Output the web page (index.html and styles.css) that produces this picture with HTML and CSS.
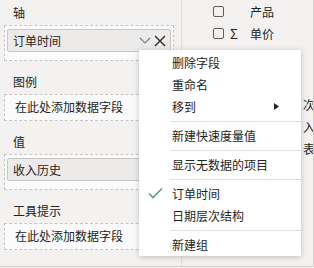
FILE: index.html
```html
<!DOCTYPE html>
<html lang="zh-CN">
<head>
    <meta charset="UTF-8">
    <title>字段面板</title>
    <link rel="stylesheet" href="styles.css">
</head>
<body>
<div class="frame">
    <div class="wells">
        <div class="well-label">轴</div>
        <div class="well">
            <div class="pill">
                <span>订单时间</span>
                <svg class="chev" width="12" height="7" viewBox="0 0 12 7"><path d="M1 1 L6 6 L11 1" fill="none" stroke="#6b8590" stroke-width="1.2"/></svg>
                <svg class="close" width="12" height="12" viewBox="0 0 12 12"><path d="M1 1 L11 11 M11 1 L1 11" fill="none" stroke="#252423" stroke-width="1.3"/></svg>
            </div>
        </div>

        <div class="well-label">图例</div>
        <div class="well empty">在此处添加数据字段</div>

        <div class="well-label">值</div>
        <div class="well">
            <div class="pill"><span>收入历史</span></div>
        </div>

        <div class="well-label">工具提示</div>
        <div class="well empty">在此处添加数据字段</div>
    </div>

    <div class="fields">
        <div class="field-row"><span class="box"></span><span class="sym"></span>产品</div>
        <div class="field-row"><span class="box"></span><span class="sym">Σ</span>单价</div>
        <div class="field-group">
            <div class="field-row sub">次</div>
            <div class="field-row sub">入</div>
            <div class="field-row sub">表</div>
        </div>
    </div>

    <div class="menu">
        <div class="item"><span class="slot"></span>删除字段</div>
        <div class="item"><span class="slot"></span>重命名</div>
        <div class="item"><span class="slot"></span><span class="grow">移到</span>
            <svg class="arrow" width="5" height="7" viewBox="0 0 5 7"><path d="M0 0 L5 3.5 L0 7 Z" fill="#252423"/></svg>
        </div>
        <div class="sep"></div>
        <div class="item"><span class="slot"></span>新建快速度量值</div>
        <div class="sep"></div>
        <div class="item"><span class="slot"></span>显示无数据的项目</div>
        <div class="sep"></div>
        <div class="item"><span class="slot">
            <svg width="15" height="12" viewBox="0 0 15 12"><path d="M1 6.5 L5 10.5 L14 1.5" fill="none" stroke="#5f9e8b" stroke-width="1.6"/></svg>
        </span>订单时间</div>
        <div class="item"><span class="slot"></span>日期层次结构</div>
        <div class="sep"></div>
        <div class="item"><span class="slot"></span>新建组</div>
    </div>
</div>
</body>
</html>
```

FILE: styles.css
```css
body {
    margin: 0;
    background: #f3f2f1;
    font-family: "Noto Sans CJK SC", "Noto Sans", sans-serif;
    font-size: 12px;
    color: #252423;
}
.frame {
    position: relative;
    display: flex;
    width: 314px;
    height: 267px;
    box-sizing: border-box;
    border-right: 1px solid #d2d0ce;
    border-bottom: 1px solid #d2d0ce;
    overflow: hidden;
}
.wells {
    width: 182px;
    flex: none;
    box-sizing: border-box;
    padding-left: 4px;
    border-right: 1px solid #e1dfdd;
}
.well-label {
    height: 25px;
    line-height: 25px;
    padding-left: 9px;
}
.well {
    width: 170px;
    box-sizing: border-box;
    border: 1px dashed #c8c6c4;
    background: #fbfbfb;
    padding: 3px 2px 8px 2px;
    margin-bottom: 8px;
}
.well.empty {
    height: 27px;
    line-height: 24px;
    padding: 0 0 0 10px;
}
.pill {
    display: flex;
    align-items: center;
    height: 23px;
    box-sizing: border-box;
    padding: 0 4px 0 5px;
    background: #edebe9;
    border: 1px solid #c8c6c4;
    border-radius: 2px;
}
.pill span {
    flex: 1;
}
.chev {
    margin-right: 3px;
}
.fields {
    flex: 1;
    overflow: hidden;
}
.field-row {
    display: flex;
    align-items: center;
    height: 22px;
    white-space: nowrap;
}
.box {
    width: 11px;
    height: 11px;
    box-sizing: border-box;
    margin-left: 31px;
    border: 1px solid #605e5c;
    border-radius: 2px;
}
.sym {
    width: 20px;
    margin-left: 6px;
    font-size: 13px;
}
.field-group {
    margin-top: 49px;
}
.field-row.sub {
    padding-left: 121px;
}
.menu {
    position: absolute;
    left: 139px;
    top: 50px;
    width: 162px;
    padding: 1px 0;
    background: #fff;
    box-shadow: 0 1px 6px rgba(0, 0, 0, 0.22);
}
.item {
    display: flex;
    align-items: center;
    height: 22px;
}
.slot {
    width: 33px;
    display: flex;
    justify-content: center;
}
.grow {
    flex: 1;
}
.arrow {
    margin-right: 22px;
}
.sep {
    height: 1px;
    margin: 4px 0 2px 31px;
    background: #e1dfdd;
}
```
